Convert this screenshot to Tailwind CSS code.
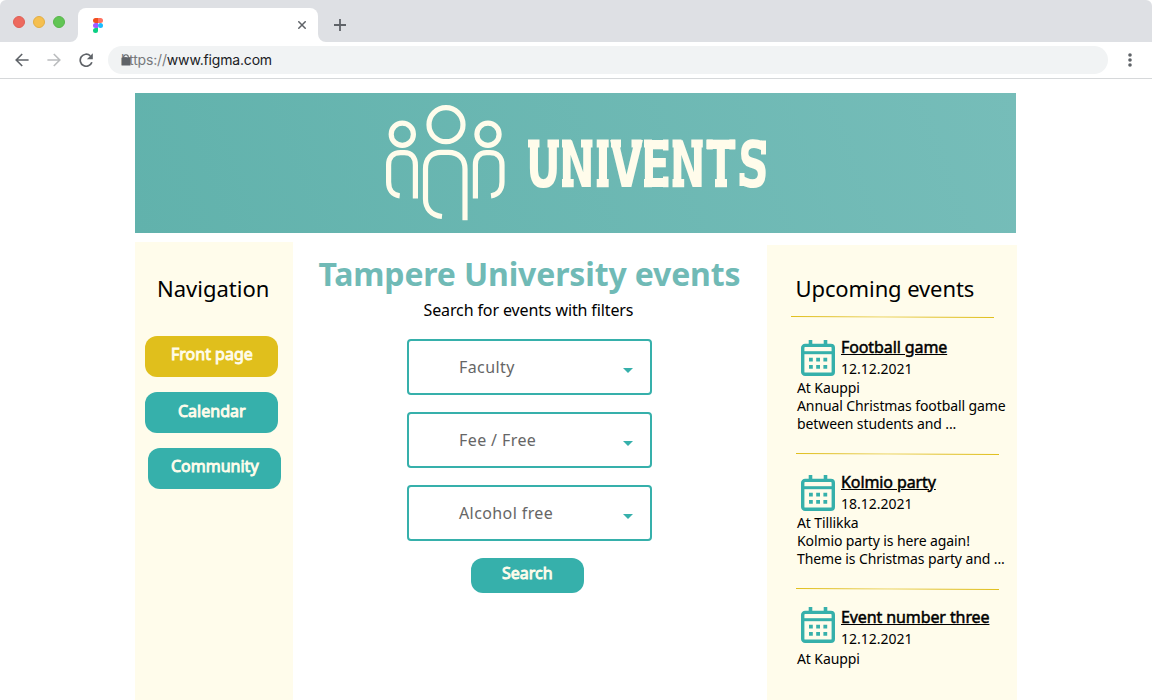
<!DOCTYPE html>
<html lang="en">
<head>
<meta charset="utf-8">
<title>Univents</title>
<script src="https://cdn.jsdelivr.net/npm/@tailwindcss/browser@4"></script>
</head>
<body class="w-[1152px] h-[700px] overflow-hidden bg-white font-['Noto_Sans',sans-serif] text-black">
<svg class="absolute size-0">
  <symbol id="cal" viewBox="0 0 34 36">
    <path d="M9.5 0v5M24.5 0v5" stroke="#36b0ab" stroke-width="3.6"/>
    <rect x="1.7" y="5.4" width="30.6" height="28.9" rx="2.4" fill="none" stroke="#36b0ab" stroke-width="3.4"/>
    <path d="M2 12.7h30" stroke="#36b0ab" stroke-width="3"/>
    <path d="M8 19.7h3.8M15.2 19.7h3.8M22.4 19.7h3.8M8 26.8h3.8M15.2 26.8h3.8M22.4 26.8h3.8" stroke="#36b0ab" stroke-width="3.8"/>
  </symbol>
  <linearGradient id="gold"><stop offset="0" stop-color="#e0bf1c"/><stop offset=".2" stop-color="#e2c332"/><stop offset=".45" stop-color="#ecd565"/><stop offset=".7" stop-color="#e2c332"/><stop offset="1" stop-color="#e0bf1c"/></linearGradient>
  <symbol id="rule" viewBox="0 0 203 3"><path d="M0 0L203 1V2L0 1Z" fill="url(#gold)"/></symbol>
</svg>

<div class="h-[42px] bg-[#dee0e4] flex rounded-t-md">
  <div class="w-[78px] pt-4 pl-[13px] flex gap-2 rounded-br-lg">
    <i class="size-3 rounded-full bg-[#ed6a5e] border border-[#df5f55]"></i>
    <i class="size-3 rounded-full bg-[#f5bf4f] border border-[#e2ae43]"></i>
    <i class="size-3 rounded-full bg-[#61c554] border border-[#58b64b]"></i>
  </div>
  <div class="relative mt-2 w-[240px] h-[34px] bg-white rounded-t-lg flex justify-between">
    <svg class="absolute -left-2 bottom-0" width="8" height="8"><path d="M8 0v8H0A8 8 0 0 0 8 0" fill="#fff"/></svg>
    <svg class="absolute -right-2 bottom-0" width="8" height="8"><path d="M0 0v8h8A8 8 0 0 1 0 0" fill="#fff"/></svg>
    <svg class="mt-[10px] ml-[15px]" width="10" height="15" viewBox="0 0 10 15">
      <path d="M5 0H2.5a2.5 2.5 0 0 0 0 5H5z" fill="#f24e1e"/><path d="M5 0h2.5a2.5 2.5 0 0 1 0 5H5z" fill="#ff7262"/>
      <path d="M5 5H2.5a2.5 2.5 0 0 0 0 5H5z" fill="#a259ff"/><circle cx="7.5" cy="7.5" r="2.5" fill="#1abcfe"/>
      <path d="M5 10H2.5A2.5 2.5 0 1 0 5 12.5z" fill="#0acf83"/>
    </svg>
    <svg class="mt-[13px] mr-3" width="8" height="8" viewBox="0 0 8 8"><path d="M.3.3l7.4 7.4M7.7.3L.3 7.7" stroke="#5f6368" stroke-width="1.5"/></svg>
  </div>
  <svg class="mt-[19px] ml-4" width="12" height="12" viewBox="0 0 12 12"><path d="M6 0v12M0 6h12" stroke="#5f6368" stroke-width="1.8"/></svg>
</div>
<div class="h-[37px] bg-white border-b border-[#d6d8da] flex items-center">
  <svg class="ml-[15px]" width="14" height="14" viewBox="0 0 14 14" fill="none" stroke="#5f6368" stroke-width="1.6"><path d="M13.6 7H1.4M7.2 1L1.2 7l6 6"/></svg>
  <svg class="ml-[18px]" width="14" height="14" viewBox="0 0 14 14" fill="none" stroke="#babcbe" stroke-width="1.6"><path d="M.4 7h12.2M6.8 1l6 6-6 6"/></svg>
  <svg class="ml-[18px]" width="14" height="14" viewBox="0 0 14 14"><path d="M12.9 9.2A6 6 0 1 1 11.3 2.8" fill="none" stroke="#5f6368" stroke-width="1.7"/><path d="M13.8 .3v6H7.9z" fill="#5f6368"/></svg>
  <div class="ml-[15px] w-[1000px] h-7 rounded-full bg-[#f1f3f4] relative pl-[13px] text-[14px] leading-7 font-[Inter,sans-serif] tracking-[-0.17px] text-[#202124]"><span class="text-[#77797c]">https://</span>www.figma.com
    <svg class="absolute left-[13px] top-2" width="10" height="12" viewBox="0 0 10 12"><rect x=".5" y="3.5" width="9" height="8" rx=".6" fill="#5f6368"/><path d="M2.7 4.5V3a2.3 2.3 0 0 1 4.6 0v1.5" fill="none" stroke="#5f6368" stroke-width="1.1"/></svg>
  </div>
  <svg class="ml-5" width="4" height="14" viewBox="0 0 4 14" fill="#5f6368"><circle cx="2" cy="2" r="1.8"/><circle cx="2" cy="7" r="1.8"/><circle cx="2" cy="12" r="1.8"/></svg>
</div>

<main class="ml-[135px] mt-[14px] w-[882px]">
  <header class="w-[881px] h-[140px] bg-linear-[70deg] from-[#61b2ac] to-[#76bdb9]">
    <svg width="881" height="140" viewBox="135 93 881 140">
      <g fill="none" stroke="#fffceb" stroke-width="5.2">
        <circle cx="402.3" cy="134.2" r="11.1"/><circle cx="446" cy="124.7" r="17"/><circle cx="488" cy="134.2" r="11.1"/>
        <path d="M399.7 195.8C392 195 388.6 189 388.6 182V165C388.6 157 393 152.7 400.5 152.7H404.5C411 152.7 415.4 157 415.4 165V198.5"/>
        <path d="M491 195.8C498.5 195 502 189 502 182V165C502 157 497.5 152.7 490 152.7H486.5C479.5 152.7 475.4 157 475.4 165V198.5"/>
        <path d="M442 216.5C431 215.5 425.5 208 425.5 199V169C425.5 158 432 152.3 441 152.3H448.5C458 152.3 465 158 465 169V220.3"/>
      </g>
      <g fill="#fffceb">
        <text transform="translate(526 187.3) scale(1.08 1.46)" font-family="DejaVu Sans" font-weight="bold" font-stretch="condensed" font-size="44" x="0 30.6 63.9 77.8 106.5 133 167 196.4">UNIVENTS</text>
        <!-- slab feet and caps on the stems -->
        <path d="M528 139.5h11.5v8H528zM547.5 139.5h11.5v8H547.5zM562 139.5h9v8H562zM581 139.5h11.5v8H581zM562 179h11.7v8.3H562zM596.7 139.5h12v8H596.7zM596.7 179h12v8.3H596.7zM611 139.5h10v8H611zM631.5 139.5h10v8H631.5zM644 139.5h8v8H644zM644 179h8v8.3H644zM672.5 139.5h9v8H672.5zM691.3 139.5h11.5v8H691.3zM672.5 179h11.7v8.3H672.5zM706.8 139.5h6v10H706.8zM729.3 139.5h6v10H729.3zM715 179h12v8.3H715zM663 139.5h5.5v11H663zM663 176.5h5.5v10.8H663zM761 140.5h5v14H761zM739.5 173h5v13H739.5z"/>
      </g>
    </svg>
  </header>

  <div class="flex items-start">
    <nav class="mt-[9px] w-[158px] h-[458px] bg-[#fffceb]">
      <h2 class="mt-[31px] ml-[22px] text-[22px] leading-[30px]">Navigation</h2>
      <div class="mt-[33px] ml-[10px] flex flex-col gap-[15px] text-[16px] leading-6 text-[#fffceb] [-webkit-text-stroke:0.9px_#fffceb]">
        <a class="w-[133px] h-[41px] rounded-xl bg-[#e0bf1c] pt-[6px] pl-[26px]">Front page</a>
        <a class="w-[133px] h-[41px] rounded-xl bg-[#36b0ab] pt-[7px] pl-[33px]">Calendar</a>
        <a class="ml-[3px] w-[133px] h-[41px] rounded-xl bg-[#36b0ab] pt-[6px] pl-[23px]">Community</a>
      </div>
    </nav>

    <section class="w-[474px] pt-[18px] flex flex-col items-start">
      <h1 class="ml-[25.5px] text-[32px] leading-[46px] font-bold tracking-[-0.15px] text-[#70bab6] whitespace-nowrap">Tampere University events</h1>
      <p class="ml-[130.5px] mt-px text-[16px] leading-6 tracking-[-0.12px] whitespace-nowrap">Search for events with filters</p>
      <div class="ml-[114px] mt-[17px] flex flex-col gap-[17px] text-[16px] tracking-[0.4px] text-[#666]">
        <div class="w-[245px] h-14 rounded border-2 border-[#36b0ab] flex justify-between pl-[50px] pr-[17px] pt-[14px] leading-6">Faculty<svg class="mt-[13px]" width="10" height="5"><path d="M0 0h10L5 5z" fill="#36b0ab"/></svg></div>
        <div class="w-[245px] h-14 rounded border-2 border-[#36b0ab] flex justify-between pl-[50px] pr-[17px] pt-[14px] leading-6">Fee / Free<svg class="mt-[13px]" width="10" height="5"><path d="M0 0h10L5 5z" fill="#36b0ab"/></svg></div>
        <div class="w-[245px] h-14 rounded border-2 border-[#36b0ab] flex justify-between pl-[50px] pr-[17px] pt-[14px] leading-6">Alcohol free<svg class="mt-[13px]" width="10" height="5"><path d="M0 0h10L5 5z" fill="#36b0ab"/></svg></div>
      </div>
      <a class="ml-[178px] mt-[17px] w-[113px] h-[35px] rounded-xl bg-[#36b0ab] pt-[3px] pl-[31px] text-[16px] leading-6 text-[#fffceb] [-webkit-text-stroke:0.9px_#fffceb]">Search</a>
    </section>

    <aside class="mt-[12px] w-[250px] h-[455px] bg-[#fffceb] pt-[28px] text-[14px] leading-[18px] tracking-[-0.1px] whitespace-nowrap">
      <h2 class="ml-[28.5px] text-[22px] leading-[30px]">Upcoming events</h2>
      <svg class="block ml-6 mt-[13px]" width="203" height="3"><use href="#rule"/></svg>
      <article class="h-[134px] pt-[16px] pl-[30px]">
        <div class="flex h-[44px]">
          <svg class="ml-1 mt-[5px]" width="34" height="36"><use href="#cal"/></svg>
          <div class="ml-[6px]"><h3 class="text-[16px] leading-6 underline [-webkit-text-stroke:0.5px_#000]">Football game</h3><p class="mt-px tracking-normal">12.12.2021</p></div>
        </div>
        <p>At Kauppi<br>Annual Christmas football game<br>between students and ...</p>
      </article>
      <svg class="block ml-[29px]" width="203" height="3"><use href="#rule"/></svg>
      <article class="h-[132px] pt-[14px] pl-[30px]">
        <div class="flex h-[44px]">
          <svg class="ml-1 mt-[5px]" width="34" height="36"><use href="#cal"/></svg>
          <div class="ml-[6px]"><h3 class="text-[16px] leading-6 underline [-webkit-text-stroke:0.5px_#000]">Kolmio party</h3><p class="mt-px tracking-normal">18.12.2021</p></div>
        </div>
        <p>At Tillikka<br>Kolmio party is here again!<br>Theme is Christmas party and ...</p>
      </article>
      <svg class="block ml-[29px]" width="203" height="3"><use href="#rule"/></svg>
      <article class="pt-[14px] pl-[30px]">
        <div class="flex h-[45px]">
          <svg class="ml-1 mt-[2px]" width="34" height="36"><use href="#cal"/></svg>
          <div class="ml-[6px]"><h3 class="text-[16px] leading-6 underline [-webkit-text-stroke:0.5px_#000]">Event number three</h3><p class="mt-px tracking-normal">12.12.2021</p></div>
        </div>
        <p>At Kauppi</p>
      </article>
    </aside>
  </div>
</main>
</body>
</html>
